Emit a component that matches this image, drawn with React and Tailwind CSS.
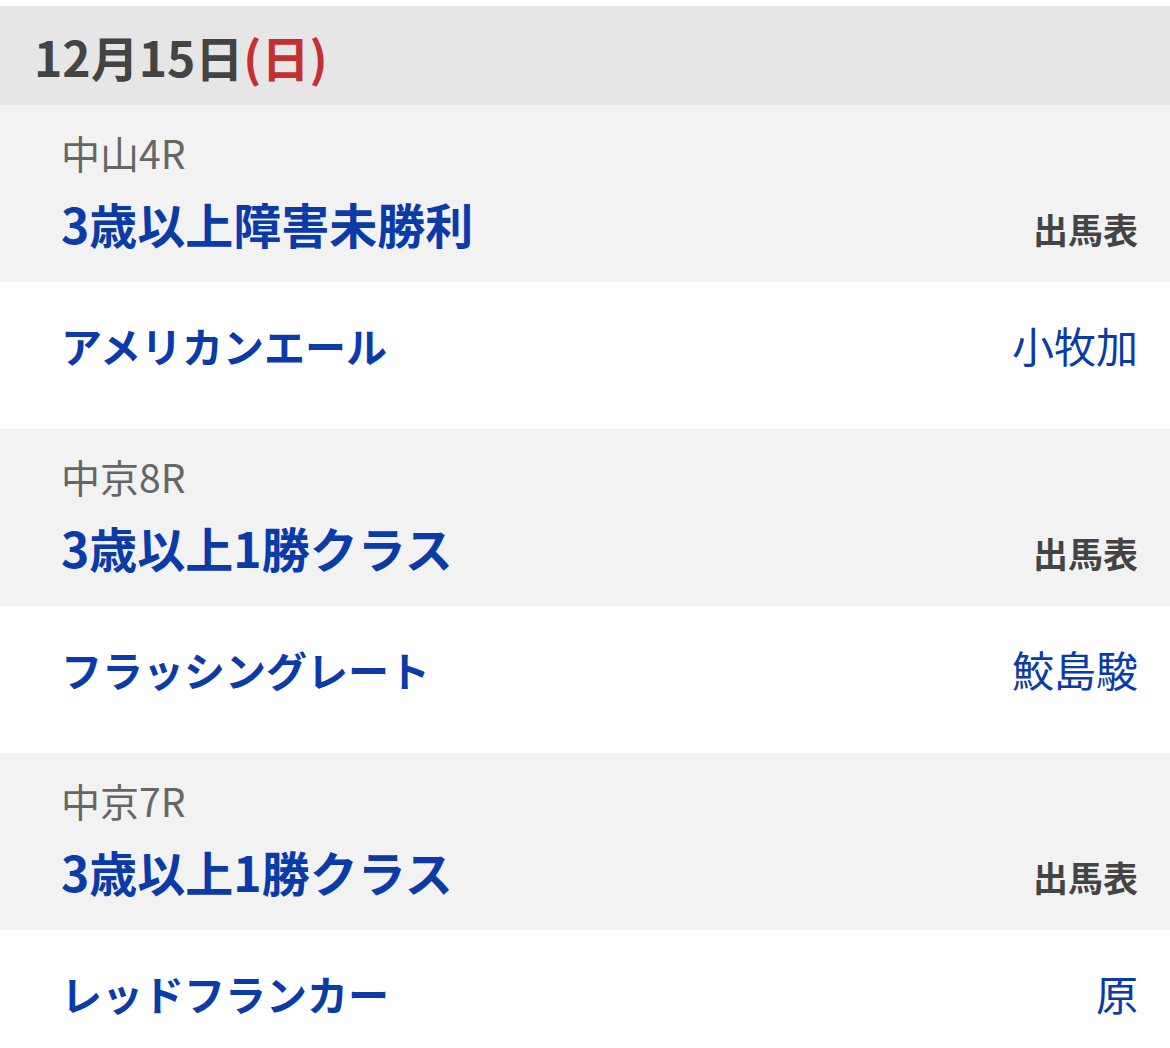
import React from 'react';

const races = [
  { venue: '中山4R', title: '3歳以上障害未勝利', horse: 'アメリカンエール', jockey: '小牧加' },
  { venue: '中京8R', title: '3歳以上1勝クラス', horse: 'フラッシングレート', jockey: '鮫島駿' },
  { venue: '中京7R', title: '3歳以上1勝クラス', horse: 'レッドフランカー', jockey: '原' },
];

const RaceBlock = ({ race }) => (
  <>
    <div className="h-[177px] bg-[#f2f2f2] pl-[61px] pr-[32px] pt-[24px]">
      <p className="text-[39px] leading-[46px] text-[#666666]">{race.venue}</p>
      <div className="mt-[18px] flex items-baseline justify-between">
        <p className="text-[48px] leading-[60px] font-bold text-[#0b3aa9]">{race.title}</p>
        <span className="text-[35px] leading-[40px] font-bold text-[#444444]">出馬表</span>
      </div>
    </div>
    <div className="flex h-[147px] items-start justify-between bg-white pl-[61px] pr-[32px] pt-[38px]">
      <p className="text-[41px] leading-[50px] font-bold text-[#0b3aa9]">{race.horse}</p>
      <p className="text-[42px] leading-[50px] text-[#0b3aa9]">{race.jockey}</p>
    </div>
  </>
);

export default function App() {
  return (
    <div className="min-h-screen bg-white pt-[6px]" style={{ fontFamily: '"Noto Sans CJK JP", "Noto Sans", sans-serif' }}>
      <div className="flex h-[99px] items-center bg-[#e6e6e6] pl-[34px]">
        <h2 className="text-[48px] leading-[60px] font-bold text-[#444444]">
          12月15日<span className="text-[#c62f2f]">(日)</span>
        </h2>
      </div>
      {races.map((race) => (
        <RaceBlock key={race.venue} race={race} />
      ))}
    </div>
  );
}
